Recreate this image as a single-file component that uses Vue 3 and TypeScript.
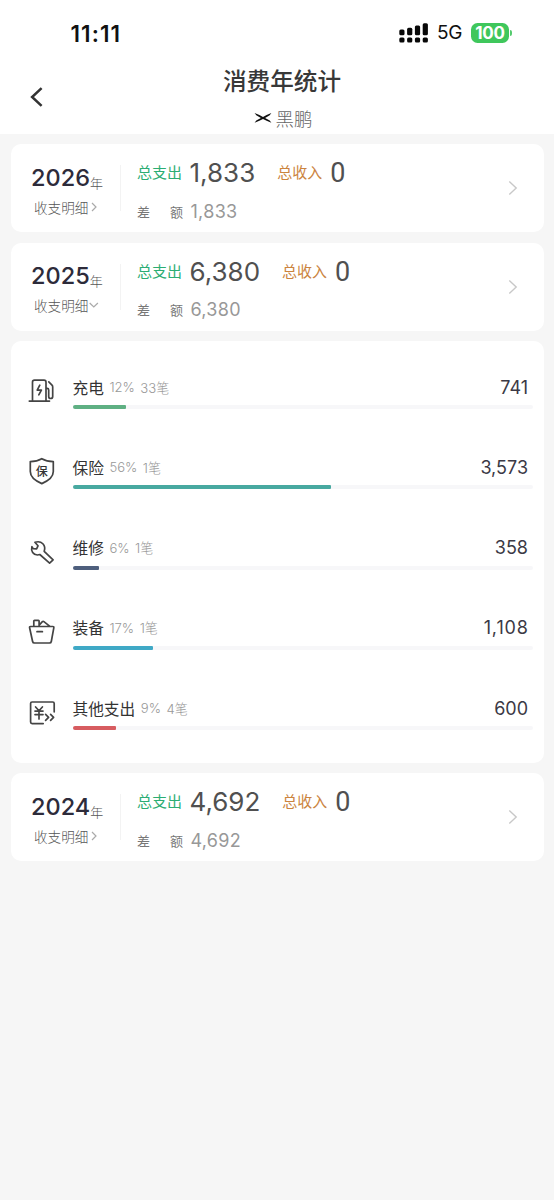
<script setup lang="ts">
interface YearSummary {
  year: number
  expense: string
  balance: string
  open: boolean
}

interface Category {
  icon: 'charge' | 'insurance' | 'repair' | 'gear' | 'other'
  name: string
  percent: number
  share: number
  count: number
  amount: string
  color: string
}

const years: YearSummary[] = [
  { year: 2026, expense: '1,833', balance: '1,833', open: false },
  { year: 2025, expense: '6,380', balance: '6,380', open: true },
  { year: 2024, expense: '4,692', balance: '4,692', open: false },
]

const categories: Category[] = [
  { icon: 'charge', name: '充电', percent: 12, share: 11.6, count: 33, amount: '741', color: '#5fb083' },
  { icon: 'insurance', name: '保险', percent: 56, share: 56.1, count: 1, amount: '3,573', color: '#48a9a0' },
  { icon: 'repair', name: '维修', percent: 6, share: 5.7, count: 1, amount: '358', color: '#4e5f7d' },
  { icon: 'gear', name: '装备', percent: 17, share: 17.4, count: 1, amount: '1,108', color: '#3fa9c6' },
  { icon: 'other', name: '其他支出', percent: 9, share: 9.4, count: 4, amount: '600', color: '#d75c60' },
]
</script>

<template>
  <div class="screen">
    <header class="header">
      <div class="status">
        <span class="clock">11:11</span>
        <div class="status-right">
          <svg class="signal" width="30" height="20" viewBox="0 0 30 20">
            <rect x="0.3" y="6.4" width="5.2" height="5.8" rx="1.5" />
            <rect x="8.1" y="4.8" width="5.2" height="7.4" rx="1.5" />
            <rect x="15.9" y="2.6" width="5.2" height="9.6" rx="1.5" />
            <rect x="23.7" y="0.2" width="5.2" height="12" rx="1.5" />
            <rect x="0.3" y="14.4" width="5.2" height="5.2" rx="1.5" />
            <rect x="8.1" y="14.4" width="5.2" height="5.2" rx="1.5" />
            <rect x="15.9" y="14.4" width="5.2" height="5.2" rx="1.5" />
            <rect x="23.7" y="14.4" width="5.2" height="5.2" rx="1.5" />
          </svg>
          <span class="network">5G</span>
          <div class="battery"><span class="battery-level">100</span></div>
          <i class="battery-tip"></i>
        </div>
      </div>
      <div class="nav">
        <svg class="back" width="14" height="22" viewBox="0 0 14 22">
          <path d="M12.6 2.1 3.1 11l9.5 8.9" />
        </svg>
        <div class="titles">
          <h1 class="title">消费年统计</h1>
          <div class="car">
            <svg width="18" height="12" viewBox="0 0 18 12">
              <path d="M.6 1 5.4 3.1 9 4.9l3.6-1.8L17.4 1l-1.7 2.2-4.6 2.7 4.6 2.7 1.7 2.2-4.8-2.1L9 6.9 5.4 8.7.6 10.8l1.7-2.2 4.6-2.7-4.6-2.7z" />
            </svg>
            <span>黑鹏</span>
          </div>
        </div>
      </div>
    </header>

    <main class="list">
      <template v-for="item in years" :key="item.year">
        <section class="card year-card">
          <div class="year-side">
            <div class="year">{{ item.year }}<small>年</small></div>
            <div class="detail">
              <span>收支明细</span>
              <svg v-if="item.open" width="10" height="10" viewBox="0 0 10 10"><path d="m.7 3 4.1 4L8.9 3" /></svg>
              <svg v-else width="10" height="10" viewBox="0 0 10 10"><path d="m3 1 4 4-4 4" /></svg>
            </div>
          </div>
          <div class="summary">
            <div class="totals">
              <span class="label expense">总支出</span>
              <span class="total">{{ item.expense }}</span>
              <span class="label income">总收入</span>
              <span class="total zero">0</span>
            </div>
            <div class="balance">
              <span class="balance-label"><span>差</span><span>额</span></span>
              <span class="balance-value">{{ item.balance }}</span>
            </div>
          </div>
          <svg class="arrow" width="10" height="16" viewBox="0 0 10 16"><path d="m1.3 1.5 6.9 6.5-6.9 6.5" /></svg>
        </section>

        <section v-if="item.open" class="card categories">
          <div v-for="row in categories" :key="row.name" class="row">
            <svg class="icon" width="28" height="28" viewBox="0 0 28 28">
              <g v-if="row.icon === 'charge'">
                <path d="M4.5 23.7V5.2q0-2 2-2H16q2 0 2 2v18.5M1.3 24.1h20.2M18 11.3h1.1q1.6 0 1.6 1.6v6.6q0 2 2 2t2-2V9.9q0-1-.7-1.8l-3.2-3.2" />
                <path d="m11.8 8.2-2.6 4.9h4.2l-2.6 4.7" />
              </g>
              <g v-else-if="row.icon === 'insurance'">
                <path d="M13.8 1.7C17 3.6 20.8 4.6 25.3 4.6v10c0 5-4.2 9-11.5 12C6.5 23.6 2.3 19.6 2.3 14.6v-10c4.5 0 8.3-1 11.5-2.9z" />
                <text x="13.8" y="18.5" text-anchor="middle">保</text>
              </g>
              <g v-else-if="row.icon === 'repair'">
                <path d="M6.9 4.3 10 7.8 8.6 10.8 5.2 10.6 3.9 8.6C2.7 13.2 5.3 16.9 9.4 17l2.4-.5 9.8 8.6 3.5-3.2-8.9-8.6C18.2 7.4 13.7 2.1 6.9 4.3z" />
              </g>
              <g v-else-if="row.icon === 'gear'">
                <path d="M2.6 8.5h22.2q1.3 0 1 1.3l-2.5 13.7q-.3 1.5-1.8 1.5H6.4q-1.5 0-1.8-1.5L1.6 9.8q-.3-1.3 1-1.3zM5.8 8.3V3q0-.7.7-.7h3.9q.7 0 .7.7v5.3M11.4 6.8l3-3.1q.7-.7 1.5-.1l6 4.7M9 13.7h5.4" />
              </g>
              <g v-else>
                <path d="M15.2 25.6H4.1q-1.5 0-1.5-1.5V5.5Q2.6 4 4.1 4h20.6q1.5 0 1.5 1.5v8.3M7.6 9l3.4 3.8L14.4 9M7 13.1h8M7 16.6h8M11 12.9v8M17.6 16.4l3 3-3 3M22.6 16.4l3 3-3 3" />
              </g>
            </svg>
            <div class="row-body">
              <div class="row-line">
                <span class="name">{{ row.name }}</span>
                <span class="meta">{{ row.percent }}%</span>
                <span class="meta">{{ row.count }}笔</span>
                <span class="amount" :class="{ wide: row.amount.startsWith('1') }">{{ row.amount }}</span>
              </div>
              <div class="track">
                <div class="fill" :style="{ width: row.share + '%', background: row.color }"></div>
              </div>
            </div>
          </div>
        </section>
      </template>
    </main>
  </div>
</template>

<style>
body {
  margin: 0;
  background: #f6f6f6;
}
</style>

<style scoped>
.screen {
  width: 554px;
  min-height: 1200px;
  box-sizing: border-box;
  background: #f6f6f6;
  font-family: Inter, "Noto Sans CJK SC", sans-serif;
  color: #333;
}
.header {
  height: 133.5px;
  background: #fff;
}
.status {
  display: flex;
  justify-content: space-between;
  height: 66px;
  padding: 0 42px 0 70.5px;
}
.clock {
  font-size: 22.5px;
  font-weight: 600;
  line-height: 67px;
  letter-spacing: 1.1px;
  color: #111;
}
.status-right {
  display: flex;
  align-items: center;
}
.signal {
  margin-right: 8px;
  fill: #080808;
}
.network {
  width: 34px;
  font-size: 19px;
  line-height: 70px;
  letter-spacing: -0.4px;
  color: #111;
}
.battery {
  width: 38px;
  height: 20px;
  border-radius: 6.5px;
  background: #3fc75c;
  text-align: center;
}
.battery-level {
  display: block;
  font-size: 17px;
  font-weight: 650;
  line-height: 20.5px;
  letter-spacing: -0.2px;
  color: #fff;
}
.battery-tip {
  width: 2px;
  height: 6px;
  margin-left: 1px;
  border-radius: 0 3px 3px 0;
  background: #55cb6e;
}
.nav {
  display: grid;
  grid-template-columns: 70px 1fr 70px;
}
.back {
  margin: 20px 0 0 29px;
  fill: none;
  stroke: #333;
  stroke-width: 2.5;
}
.titles {
  text-align: center;
}
.title {
  margin: 0;
  padding-left: 10px;
  font-size: 23.6px;
  font-weight: 500;
  line-height: 31px;
  color: #383838;
}
.car {
  display: flex;
  align-items: center;
  justify-content: center;
  gap: 3px;
  height: 28px;
  margin-top: 7px;
  padding-left: 13px;
  font-size: 18.5px;
  font-weight: 300;
  color: #666;
}
.car svg {
  fill: #111;
}
.list {
  display: flex;
  flex-direction: column;
  gap: 10.5px;
  padding: 10.5px 10.5px 0;
}
.card {
  box-sizing: border-box;
  border-radius: 10px;
  background: #fff;
}
.year-card {
  display: flex;
  align-items: center;
  height: 88px;
  padding-right: 26px;
}
.year-side {
  box-sizing: border-box;
  width: 110px;
  height: 46px;
  padding-left: 20.5px;
  border-right: 1px solid #f3f3f3;
}
.year {
  display: flex;
  height: 31px;
  margin-top: -3.5px;
  font-size: 23.5px;
  font-weight: 450;
  line-height: 31px;
  white-space: nowrap;
  color: #2d2b3a;
}
.year small {
  padding-top: 6px;
  font-size: 13px;
  font-weight: 300;
  color: #555;
}
.detail {
  display: flex;
  align-items: center;
  height: 20px;
  margin: 4px 0 0 3px;
  font-size: 13.6px;
  font-weight: 300;
  color: #555;
}
.detail svg {
  margin-left: 1px;
  fill: none;
  stroke: #aaa;
  stroke-width: 1.2;
}
.summary {
  flex: 1;
  padding: 4px 0 0 16.5px;
}
.totals {
  display: flex;
  align-items: center;
  height: 34px;
}
.label {
  width: 45px;
  font-size: 15px;
  line-height: 36px;
  white-space: nowrap;
}
.expense {
  margin-right: 7.5px;
  color: #2bad73;
}
.income {
  margin: 0 8px 0 22px;
  color: #cb843e;
}
.total {
  font-size: 26px;
  line-height: 34px;
  color: #505050;
}
.zero {
  font-family: Roboto, sans-serif;
  font-size: 27px;
}
.balance {
  display: flex;
  align-items: center;
  height: 26px;
  margin-top: 8px;
}
.balance-label {
  display: flex;
  justify-content: space-between;
  width: 46px;
  margin-right: 7.5px;
  font-size: 13px;
  color: #777;
}
.balance-value {
  font-size: 18px;
  letter-spacing: 0.3px;
  color: #989898;
}
.arrow {
  fill: none;
  stroke: #c8c8c8;
  stroke-width: 1.4;
}
.categories {
  height: 421.5px;
  padding: 32px 10.5px 0 17px;
}
.row {
  display: flex;
  height: 80.3px;
}
.icon {
  flex: none;
  margin: 4px 17px 0 0;
  fill: none;
  stroke: #444;
  stroke-width: 1.7;
  stroke-linecap: round;
  stroke-linejoin: round;
}
.icon text {
  font-size: 12px;
  font-weight: 500;
  fill: #333;
  stroke: none;
}
.row-body {
  flex: 1;
}
.row-line {
  display: flex;
  align-items: center;
  height: 28px;
  padding-right: 5px;
}
.name {
  margin-right: 5.5px;
  font-size: 15.7px;
  color: #333;
}
.meta {
  margin-right: 5.5px;
  font-size: 13.1px;
  font-weight: 300;
  color: #999;
}
.amount {
  margin-left: auto;
  font-size: 18px;
  color: #3b3945;
}
.wide {
  letter-spacing: 0.9px;
  margin-right: -0.9px;
}
.track {
  height: 4px;
  margin-top: 4px;
  border-radius: 2px;
  background: #f7f7f9;
}
.fill {
  height: 4px;
  border-radius: 2px 1px 1px 2px;
}
</style>
